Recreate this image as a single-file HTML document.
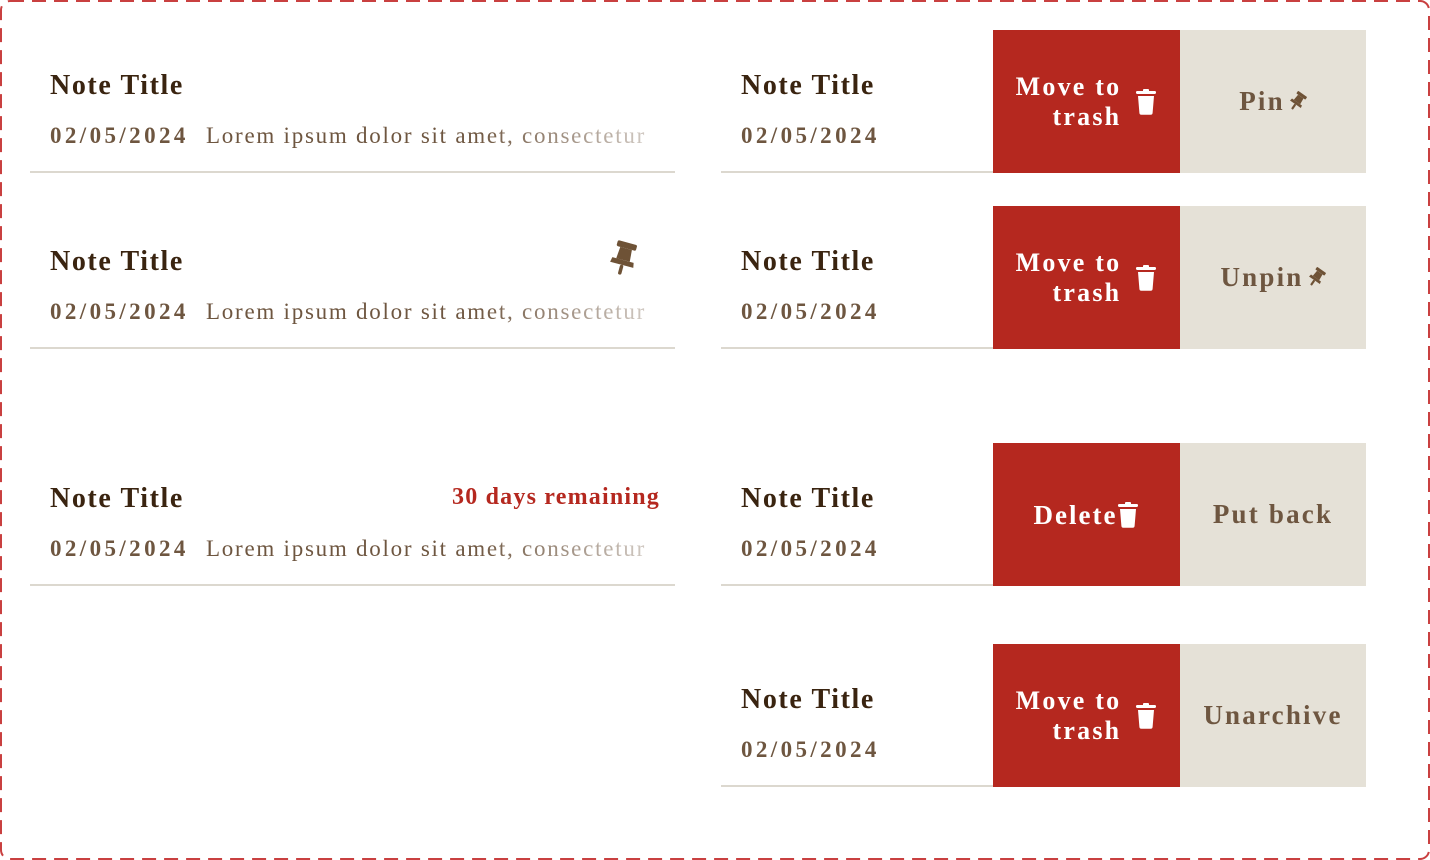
<!DOCTYPE html>
<html><head><meta charset="utf-8"><style>
*{margin:0;padding:0;box-sizing:border-box}
body{width:1430px;height:860px;background:#fff;font-family:"Liberation Serif",serif;position:relative;overflow:hidden}
.item{position:absolute;height:143px;border-bottom:2px solid #dcd8cf}
.t{position:absolute;left:20px;font-size:28px;font-weight:bold;color:#3a2410;letter-spacing:1.6px}
.d{position:absolute;left:20px;font-size:23px;font-weight:bold;color:#6e5640;letter-spacing:3.4px}
.p{position:absolute;left:176px;font-size:23px;color:#6e5640;white-space:nowrap;width:445px;overflow:hidden;letter-spacing:1.75px;
 -webkit-mask-image:linear-gradient(to right,#000 60%,rgba(0,0,0,.3));mask-image:linear-gradient(to right,#000 60%,rgba(0,0,0,.3))}
.red{position:absolute;left:272px;top:0;width:187px;height:143px;background:#b5281f;color:#fff;font-weight:bold;font-size:26px;display:flex;align-items:center;justify-content:center;line-height:30px}
.beige{position:absolute;left:459px;top:0;width:186px;height:143px;background:#e5e1d7;color:#6e5640;font-weight:bold;font-size:27px;display:flex;align-items:center;justify-content:center;letter-spacing:2.2px}
.mv{text-align:right;margin-right:14px;letter-spacing:2.2px}
</style></head><body>
<svg style="position:absolute;left:0;top:0" width="1430" height="860"><rect x="1" y="1" width="1428" height="858" rx="9" fill="none" stroke="#c94040" stroke-width="2" stroke-dasharray="14 8"/></svg>

<div class="item" style="left:30px;top:30px;width:645px">
 <div class="t" style="top:40px">Note Title</div>
 <div class="d" style="top:93px">02/05/2024</div>
 <div class="p" style="top:93px">Lorem ipsum dolor sit amet, consectetur</div>
</div>
<div class="item" style="left:30px;top:206px;width:645px">
 <div class="t" style="top:40px">Note Title</div>
 <svg style="position:absolute;left:576px;top:34px" width="34" height="40" viewBox="0 0 34 40"><g transform="rotate(15 17 20)" fill="#6e5236"><rect x="7" y="2" width="20" height="6" rx="1.5"/><path d="M11 8h12l1 12h-14z"/><path d="M6 20h22l1 5H5z"/><rect x="15.5" y="25" width="3.5" height="10" rx="1.7"/></g></svg>
 <div class="d" style="top:93px">02/05/2024</div>
 <div class="p" style="top:93px">Lorem ipsum dolor sit amet, consectetur</div>
</div>
<div class="item" style="left:30px;top:443px;width:645px">
 <div class="t" style="top:40px">Note Title</div>
 <div style="position:absolute;right:15px;top:41px;font-size:24px;font-weight:bold;color:#b5281f;letter-spacing:1.2px">30 days remaining</div>
 <div class="d" style="top:93px">02/05/2024</div>
 <div class="p" style="top:93px">Lorem ipsum dolor sit amet, consectetur</div>
</div>

<div class="item" style="left:721px;top:30px;width:645px">
 <div class="t" style="top:40px">Note Title</div>
 <div class="d" style="top:93px">02/05/2024</div>
 <div class="red"><div class="mv">Move to<br>trash</div><svg width="22" height="26" viewBox="0 0 22 26"><rect x="1" y="2" width="20" height="3" rx="1.2" fill="#fff"/><rect x="8" y="0" width="6" height="3" rx="1" fill="#fff"/><path d="M3 7h16l-1.4 17a2 2 0 0 1-2 1.8H6.4a2 2 0 0 1-2-1.8z" fill="#fff"/></svg></div>
 <div class="beige">Pin<svg style="margin-left:2px" width="20" height="22" viewBox="0 0 34 40"><g transform="rotate(35 17 20)" fill="#6e5236"><rect x="7" y="2" width="20" height="6" rx="1.5"/><path d="M11 8h12l1 12h-14z"/><path d="M6 20h22l1 5H5z"/><rect x="15" y="25" width="4" height="11" rx="1.5"/></g></svg></div>
</div>
<div class="item" style="left:721px;top:206px;width:645px">
 <div class="t" style="top:40px">Note Title</div>
 <div class="d" style="top:93px">02/05/2024</div>
 <div class="red"><div class="mv">Move to<br>trash</div><svg width="22" height="26" viewBox="0 0 22 26"><rect x="1" y="2" width="20" height="3" rx="1.2" fill="#fff"/><rect x="8" y="0" width="6" height="3" rx="1" fill="#fff"/><path d="M3 7h16l-1.4 17a2 2 0 0 1-2 1.8H6.4a2 2 0 0 1-2-1.8z" fill="#fff"/></svg></div>
 <div class="beige">Unpin<svg style="margin-left:2px" width="20" height="22" viewBox="0 0 34 40"><g transform="rotate(35 17 20)" fill="#6e5236"><rect x="7" y="2" width="20" height="6" rx="1.5"/><path d="M11 8h12l1 12h-14z"/><path d="M6 20h22l1 5H5z"/><rect x="15" y="25" width="4" height="11" rx="1.5"/></g></svg></div>
</div>
<div class="item" style="left:721px;top:443px;width:645px">
 <div class="t" style="top:40px">Note Title</div>
 <div class="d" style="top:93px">02/05/2024</div>
 <div class="red" style="font-size:27px"><span style="letter-spacing:2px">Delete</span><svg style="margin-left:0px" width="22" height="26" viewBox="0 0 22 26"><rect x="1" y="2" width="20" height="3" rx="1.2" fill="#fff"/><rect x="8" y="0" width="6" height="3" rx="1" fill="#fff"/><path d="M3 7h16l-1.4 17a2 2 0 0 1-2 1.8H6.4a2 2 0 0 1-2-1.8z" fill="#fff"/></svg></div>
 <div class="beige">Put back</div>
</div>
<div class="item" style="left:721px;top:644px;width:645px">
 <div class="t" style="top:40px">Note Title</div>
 <div class="d" style="top:93px">02/05/2024</div>
 <div class="red"><div class="mv">Move to<br>trash</div><svg width="22" height="26" viewBox="0 0 22 26"><rect x="1" y="2" width="20" height="3" rx="1.2" fill="#fff"/><rect x="8" y="0" width="6" height="3" rx="1" fill="#fff"/><path d="M3 7h16l-1.4 17a2 2 0 0 1-2 1.8H6.4a2 2 0 0 1-2-1.8z" fill="#fff"/></svg></div>
 <div class="beige">Unarchive</div>
</div>
</body></html>
